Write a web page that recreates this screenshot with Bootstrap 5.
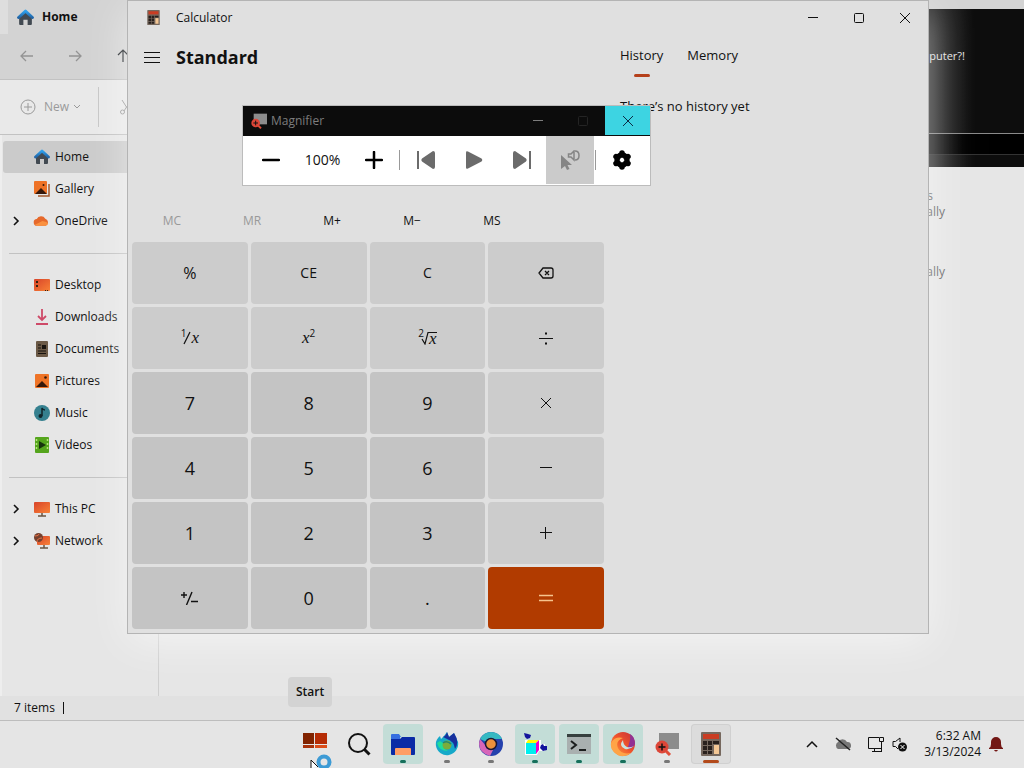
<!DOCTYPE html>
<html lang="en">
<head>
    <meta charset="UTF-8">
    <meta name="viewport" content="width=device-width, initial-scale=1.0">
    <title>Desktop</title>
    <!-- Bootstrap CSS -->
    <link href="https://cdn.jsdelivr.net/npm/bootstrap@5.3.0/dist/css/bootstrap.min.css" rel="stylesheet">
    <style>
        body {
            font-family: "Open Sans", "Noto Sans", sans-serif;
            font-size: 12px;
            line-height: 16px;
            color: #111;
            background: #e6e6e6;
        }
        button {
            font: inherit;
            color: inherit;
            background: none;
            border: 0;
            padding: 0;
        }
        svg {
            display: block;
            flex: none;
        }
        .line-icon {
            fill: none;
            stroke: currentColor;
        }

        /* Explorer */
        .tab-strip {
            height: 34px;
            padding-left: 17px;
            background: linear-gradient(90deg, #dedede 8px, #d3d3d3 8px);
        }
        .nav-strip {
            height: 46px;
            padding: 0 20px 2px;
            gap: 32px;
            background: #d3d3d3;
            border-bottom: 1px solid #c2c2c2;
            color: #949494;
        }
        .command-strip {
            height: 55px;
            padding-left: 20px;
            background: #e9e9e9;
            border-bottom: 1px solid #c2c2c2;
            color: #9a9a9a;
        }
        .new-btn {
            width: 79px;
            height: 40px;
            border-right: 1px solid #c6c6c6;
        }
        .side-pane {
            width: 159px;
            padding: 6px 0 0 1px;
            border-right: 1px solid #cfcfcf;
            border-left: 2px solid #eee;
        }
        .side-link {
            height: 32px;
            padding-left: 31px;
            gap: 5px;
            color: #111;
            text-decoration: none;
        }
        .side-link.has-arrow {
            padding-left: 9px;
        }
        .side-link.current {
            background: #cbcbcb;
            border-radius: 3px;
        }
        .side-rule {
            height: 1px;
            margin: 16px 0 15px 6px;
            background: #c2c2c2;
        }
        .file-list {
            padding: 53px 79px 0 0;
            color: #666;
            text-align: right;
        }
        .file-gap {
            height: 44px;
        }
        .status-strip {
            height: 24px;
            padding-left: 14px;
            background: #e1e1e1;
        }
        .status-mark {
            width: 1px;
            height: 12px;
            background: #111;
        }

        /* Console */
        .console-win {
            top: 9px;
            right: 0;
            width: 240px;
            height: 158px;
            background: linear-gradient(90deg, #2c2c2c 150px, #0d0d0d 190px);
            color: #e4e4e4;
        }
        .console-text {
            height: 125px;
            padding: 39px 59px 0 0;
            font-size: 11px;
            text-align: right;
            border-bottom: 1px solid #8a8a8a;
        }
        .console-line {
            height: 21px;
            background: linear-gradient(90deg, #1c1c1c 150px, #000 180px);
            border-bottom: 1px solid #333;
        }

        /* Calculator */
        .calc-win {
            top: 0;
            left: 127px;
            right: 95px;
            bottom: 86px;
            background: #e0e0e0;
            border: 1px solid #b4b4b4;
            box-shadow: 0 8px 40px rgba(255, 255, 255, .55);
        }
        .calc-title {
            height: 33px;
            padding-left: 19px;
        }
        .win-btn {
            width: 46px;
            height: 32px;
        }
        .calc-left {
            width: 60%;
            padding: 0 4px 4px;
        }
        .calc-right {
            width: 40%;
            padding: 11px 12px;
            font-size: 13px;
        }
        .calc-head {
            height: 46px;
            padding-left: 12px;
            gap: 16px;
        }
        .calc-head h1 {
            font-size: 18px;
            line-height: 26px;
        }
        .calc-screen {
            height: 122px;
        }
        .memory-row {
            display: grid;
            grid-template-columns: repeat(5, 80px);
            height: 40px;
            padding-bottom: 2px;
        }
        .memory-row button:disabled {
            color: #999;
        }
        .key-grid {
            display: grid;
            grid-template-columns: repeat(4, 1fr);
            grid-auto-rows: 1fr;
            gap: 3px;
        }
        .key {
            display: flex;
            align-items: center;
            justify-content: center;
            background: #ccc;
            border-radius: 4px;
            font-size: 14px;
        }
        .key.digit {
            background: #c4c4c4;
            font-size: 18px;
        }
        .key.percent {
            font-size: 16px;
        }
        .key.equals {
            background: #b13b00;
            color: #f6c48d;
        }
        .key i {
            font-family: "Liberation Serif", serif;
            font-size: 17px;
        }
        .key sup {
            font-size: 10px;
        }
        .key .tucked {
            margin-right: -3px;
        }
        .key .root-x {
            border-top: 1px solid #111;
            line-height: 11px;
        }
        .side-tabs {
            gap: 24px;
        }
        .side-tabs button {
            height: 29px;
            padding-bottom: 9px;
            line-height: 20px;
        }
        .tab-mark {
            width: 16px;
            height: 3px;
            border-radius: 2px;
            background: #b5401b;
        }
        .history-note {
            margin: 19px 0 0;
            line-height: 20px;
        }

        /* Magnifier */
        .mag-win {
            top: 105px;
            left: 242px;
            width: 409px;
            background: #fff;
            border: 1px solid #bcbcbc;
        }
        .mag-title {
            height: 30px;
            padding-left: 8px;
            background: #0c0c0c;
            color: #7d7d7d;
        }
        .mag-title .win-btn {
            width: 45px;
            height: 30px;
        }
        .mag-title .mag-close {
            height: 29px;
            align-self: start;
            background: #3dd4e2;
            color: #0c2c44;
        }
        .mag-title button:disabled {
            color: #242424;
        }
        .mag-tools {
            height: 49px;
            padding-bottom: 1px;
            color: #6b6b6b;
        }
        .mag-tools button {
            width: 48px;
            height: 48px;
            display: flex;
            align-items: center;
            justify-content: center;
        }
        .mag-level {
            width: 47px;
            font-size: 14px;
            color: #111;
            text-align: center;
        }
        .mag-gap {
            width: 1px;
            height: 20px;
            margin: 0 2px 0 1px;
            background: #999;
        }
        .mag-tools .pressed {
            background: #cbcbcb;
        }

        /* Taskbar */
        .task-strip {
            display: grid;
            grid-template-columns: 1fr auto 1fr;
            height: 48px;
            background: #e5e5e5;
            box-shadow: inset 0 1px #bdbdbd;
        }
        .task-icons {
            padding-left: 2px;
        }
        .task-btn {
            position: relative;
            width: 40px;
            height: 40px;
            border-radius: 4px;
            display: flex;
            align-items: center;
            justify-content: center;
        }
        .task-btn.running {
            background: #c3ddd7;
        }
        .task-btn.front {
            background: #dcdcdc;
            box-shadow: inset 0 0 0 1px #d0d0d0;
        }
        .run-mark {
            position: absolute;
            bottom: 1px;
            width: 6px;
            height: 3px;
            border-radius: 2px;
            background: #777;
        }
        .running .run-mark {
            background: #16705c;
        }
        .front .run-mark {
            width: 16px;
            background: #b34a1b;
        }
        .start-tip {
            bottom: 13px;
            left: 288px;
            padding: 7px 8px;
            background: #d3d3d3;
            border-radius: 4px;
        }
        .pointer {
            left: 310px;
            bottom: 0;
        }
        .tray {
            padding-right: 21px;
            color: #111;
        }
    </style>
</head>
<body class="vh-100 d-flex flex-column overflow-hidden">

    <!-- Shared icons -->
    <svg width="0" height="0" class="position-absolute">
        <defs>
            <linearGradient id="orange" x1="0" y1="0" x2="1" y2="1"><stop stop-color="#d8442a"/><stop offset="1" stop-color="#f98236"/></linearGradient>
            <linearGradient id="edge" x1="0" y1="1" x2="1" y2="0"><stop stop-color="#ffae43"/><stop offset=".5" stop-color="#f0562c"/><stop offset="1" stop-color="#c52f38"/></linearGradient>
            <linearGradient id="roof" x1="0" y1="0" x2="0" y2="1"><stop stop-color="#2fa0ec"/><stop offset="1" stop-color="#2266a8"/></linearGradient>
            <symbol id="house" viewBox="0 0 16 16"><path d="M2 7v7q0 1 1 1h3v-5h4v5h3q1 0 1-1V7L8 2z" fill="#424a52"/><path d="M1.500 8 8 2l6.500 6" fill="none" stroke="url(#roof)" stroke-width="2.800" stroke-linecap="round" stroke-linejoin="round"/></symbol>
            <symbol id="picture" viewBox="0 0 16 16"><rect x="1" y="1" width="14" height="14" rx="1" fill="#ef7427"/><path d="m2 14 6-6 6 6z" fill="#35180b"/><circle cx="11.500" cy="4.500" r="1.300" fill="#35180b"/></symbol>
            <symbol id="calc" viewBox="0 0 20 24"><rect width="20" height="24" rx="1" fill="#76685e"/><path fill="#ca3c22" d="M2 2h16v5H2z"/><path fill="#29201c" d="M2 9h4v4H2zm5 0h4v4H7zm5 0h6v3h-6zM2 14h4v4H2zm5 0h4v4H7zM2 19h4v3H2zm5 0h4v3H7z"/><path fill="#f4c795" d="M13 13h5v9h-5z"/></symbol>
            <symbol id="magnify" viewBox="0 0 24 24"><path fill="#8c8c8c" d="M4 1h20v16H4z"/><path stroke="#e04c37" stroke-width="3" d="m10 18 5 5"/><circle cx="7" cy="15" r="6.500" fill="#dc4638"/><path stroke="#111" stroke-width="1.500" d="M3.500 15h7M7 11.500v7"/></symbol>
            <symbol id="min" viewBox="0 0 12 12"><path d="M1 5.500h10"/></symbol>
            <symbol id="max" viewBox="0 0 12 12"><rect x="1.500" y="1.500" width="9" height="9" rx="1"/></symbol>
            <symbol id="close" viewBox="0 0 12 12"><path d="m1 1 10 10M11 1 1 11"/></symbol>
            <symbol id="arrow" viewBox="0 0 8 12"><path d="m2 2 4 4-4 4"/></symbol>
        </defs>
    </svg>

    <main class="position-relative flex-grow-1 overflow-hidden">

        <!-- File Explorer -->
        <section class="h-100 d-flex flex-column">
            <div class="tab-strip d-flex align-items-center gap-2 fw-bold">
                <svg width="17" height="17"><use href="#house"/></svg>Home
            </div>
            <div class="nav-strip d-flex align-items-center">
                <button aria-label="Back"><svg class="line-icon" width="16" height="16"><path d="M13 8H1m5-5L1 8l5 5" stroke-width="1.300"/></svg></button>
                <button aria-label="Forward"><svg class="line-icon" width="16" height="16"><path d="M1 8h12M8 3l5 5-5 5" stroke-width="1.300"/></svg></button>
                <button class="text-dark" aria-label="Up"><svg class="line-icon" width="14" height="16"><path d="M7 14V2M2 7l5-5 5 5" stroke-width="1.200"/></svg></button>
            </div>
            <div class="command-strip d-flex align-items-center">
                <button class="new-btn d-flex align-items-center">
                    <svg class="line-icon me-2" width="16" height="16"><circle cx="8" cy="8" r="7"/><path d="M8 4v8M4 8h8"/></svg>New
                    <svg class="line-icon ms-1" width="8" height="8"><path d="m1 2 3 3 3-3"/></svg>
                </button>
                <button class="ms-3" aria-label="Cut"><svg class="line-icon ms-1" width="16" height="16"><path d="m3 1 7 11M12 1 5 12"/><circle cx="3.500" cy="13" r="2"/><circle cx="11.500" cy="13" r="2"/></svg></button>
            </div>
            <div class="d-flex flex-grow-1">
                <nav class="side-pane">
                    <a href="#" class="side-link current d-flex align-items-center"><svg width="16" height="16"><use href="#house"/></svg>Home</a>
                    <a href="#" class="side-link d-flex align-items-center"><svg width="16" height="16"><path d="M4 15h11V3" fill="none" stroke="#a4592e" stroke-width="1.500"/><rect width="13" height="13" rx="1" fill="#ee7226"/><path d="m1 13 6-6 6 6z" fill="#35180b"/><circle cx="9.500" cy="4" r="1" fill="#35180b"/></svg>Gallery</a>
                    <a href="#" class="side-link has-arrow d-flex align-items-center"><svg class="line-icon" width="8" height="12" stroke-width="1.600"><use href="#arrow"/></svg><svg class="ms-2" width="17" height="16" viewBox="0 0 18 16"><path d="M4.500 13a3.500 3.500 0 0 1-.5-7 5 5 0 0 1 9-.5A4 4 0 0 1 13.500 13z" fill="#e6692b"/><path d="m2 12 8-4 4 1 2 2a3 3 0 0 1-2.500 2h-9z" fill="#fa913f"/></svg>OneDrive</a>
                    <div class="side-rule"></div>
                    <a href="#" class="side-link d-flex align-items-center"><svg width="16" height="16"><rect y="2" width="16" height="12" rx="1" fill="url(#orange)"/><path d="M2 4h2v2H2zm0 4h2v2H2zm9 5h1v1h-1zm2 0h1v1h-1z" fill="#321"/></svg>Desktop</a>
                    <a href="#" class="side-link d-flex align-items-center"><svg width="16" height="16" fill="none" stroke="#ce4a68"><path d="M8 0v11M4 7l4 4 4-4M2 15h12" stroke-width="1.800"/></svg>Downloads</a>
                    <a href="#" class="side-link d-flex align-items-center"><svg width="16" height="16"><rect x="2" width="12" height="16" rx="1" fill="#6b5946"/><path d="M4 4h3m-3 3h3m-3 3h8m-8 2.500h8" stroke="#17120e" stroke-width="1.200"/><path d="M8 4h4v4H8z" fill="#17120e"/></svg>Documents</a>
                    <a href="#" class="side-link d-flex align-items-center"><svg width="16" height="16"><use href="#picture"/></svg>Pictures</a>
                    <a href="#" class="side-link d-flex align-items-center"><svg width="16" height="16"><circle cx="8" cy="8" r="8" fill="#35808f"/><path d="M8 11V3q1 2 3 2" fill="none" stroke="#102329" stroke-width="1.500"/><circle cx="6.500" cy="11" r="2" fill="#102329"/></svg>Music</a>
                    <a href="#" class="side-link d-flex align-items-center"><svg width="16" height="16"><rect x="1" width="14" height="16" rx="1" fill="#55a51d"/><path d="M2.500 2v12M13.500 2v12" stroke="#b6e47c" stroke-width="1.500" stroke-dasharray="2 2"/><path d="m5 4 7 4-7 4z" fill="#17330e"/></svg>Videos</a>
                    <div class="side-rule"></div>
                    <a href="#" class="side-link has-arrow d-flex align-items-center"><svg class="line-icon" width="8" height="12" stroke-width="1.600"><use href="#arrow"/></svg><svg class="ms-2" width="17" height="16"><rect x="1" y="1" width="16" height="11" rx="1" fill="url(#orange)"/><path d="M9 12v3m-4 0h8" stroke="#6b5542" stroke-width="1.500"/></svg>This PC</a>
                    <a href="#" class="side-link has-arrow d-flex align-items-center"><svg class="line-icon" width="8" height="12" stroke-width="1.600"><use href="#arrow"/></svg><svg class="ms-2" width="17" height="16"><rect x="4" y="3" width="13" height="9" rx="1" fill="url(#orange)"/><path d="M11 12v3m-4 0h8" stroke="#6b5542" stroke-width="1.500"/><circle cx="5.500" cy="4.500" r="4.500" fill="#74402f"/><path d="M2 3q4 0 4-2m-2 8q0-4 5-4" fill="none" stroke="#e97244"/></svg>Network</a>
                </nav>
                <div class="file-list flex-grow-1">
                    <div class="pe-2 me-1">Documents</div>
                    <div>Stored locally</div>
                    <div class="file-gap"></div>
                    <div>Stored locally</div>
                </div>
            </div>
            <div class="status-strip d-flex align-items-center">7 items<span class="status-mark ms-2"></span></div>
        </section>

        <!-- Console -->
        <section class="console-win position-absolute">
            <div class="console-text">computer?!</div>
            <div class="console-line"></div>
        </section>

        <!-- Calculator -->
        <section class="calc-win position-absolute d-flex flex-column">
            <div class="calc-title d-flex align-items-center">
                <svg width="13" height="15"><use href="#calc"/></svg>
                <span class="ms-3 me-auto">Calculator</span>
                <button class="win-btn d-flex align-items-center justify-content-center" aria-label="Minimize"><svg class="line-icon" width="12" height="12"><use href="#min"/></svg></button>
                <button class="win-btn d-flex align-items-center justify-content-center" aria-label="Maximize"><svg class="line-icon" width="12" height="12"><use href="#max"/></svg></button>
                <button class="win-btn d-flex align-items-center justify-content-center" aria-label="Close"><svg class="line-icon" width="12" height="12"><use href="#close"/></svg></button>
            </div>
            <div class="d-flex flex-grow-1">
                <div class="calc-left d-flex flex-column">
                    <div class="calc-head d-flex align-items-center">
                        <button aria-label="Open navigation"><svg class="line-icon" width="16" height="16"><path d="M0 3.500h16M0 8.500h16M0 13.500h16"/></svg></button>
                        <h1 class="m-0 fw-bold">Standard</h1>
                    </div>
                    <div class="calc-screen"></div>
                    <div class="memory-row">
                        <button disabled>MC</button>
                        <button disabled>MR</button>
                        <button>M+</button>
                        <button>M−</button>
                        <button>MS</button>
                    </div>
                    <div class="key-grid flex-grow-1">
                        <button class="key percent">%</button>
                        <button class="key">CE</button>
                        <button class="key">C</button>
                        <button class="key" aria-label="Backspace"><svg class="line-icon" width="16" height="12" stroke-width="1.300"><path d="M5 1h8a2 2 0 0 1 2 2v6a2 2 0 0 1-2 2H5L1 6zM7 4l4 4m0-4L7 8"/></svg></button>
                        <button class="key" aria-label="Reciprocal"><sup class="tucked">1</sup><svg class="line-icon" width="8" height="14"><path d="M1 13 7 1" stroke-width="1.200"/></svg><i>x</i></button>
                        <button class="key" aria-label="Square"><i>x</i><sup>2</sup></button>
                        <button class="key" aria-label="Square root"><sup class="tucked">2</sup><svg class="line-icon" width="8" height="14"><path d="M1 8l3 5L7 1.500h1" stroke-width="1.200"/></svg><i class="root-x">x</i></button>
                        <button class="key" aria-label="Divide"><svg class="line-icon" width="14" height="14"><path d="M0 7.500h14"/><path d="M6 2.500h2m-2 10h2" stroke-width="2"/></svg></button>
                        <button class="key digit">7</button>
                        <button class="key digit">8</button>
                        <button class="key digit">9</button>
                        <button class="key" aria-label="Multiply"><svg class="line-icon" width="12" height="12"><use href="#close"/></svg></button>
                        <button class="key digit">4</button>
                        <button class="key digit">5</button>
                        <button class="key digit">6</button>
                        <button class="key" aria-label="Minus"><svg class="line-icon" width="12" height="12"><path d="M0 5.500h12"/></svg></button>
                        <button class="key digit">1</button>
                        <button class="key digit">2</button>
                        <button class="key digit">3</button>
                        <button class="key" aria-label="Plus"><svg class="line-icon" width="12" height="12"><path d="M0 5.500h12M5.500 0v12"/></svg></button>
                        <button class="key digit" aria-label="Negate"><svg class="line-icon" width="17" height="14"><path d="M0 4h6M3 1v6M5.500 14 11 1M10 10.500h7" stroke-width="1.400"/></svg></button>
                        <button class="key digit">0</button>
                        <button class="key digit">.</button>
                        <button class="key equals" aria-label="Equals"><svg class="line-icon" width="14" height="8"><path d="M0 1.500h14M0 6.500h14" stroke-width="1.400"/></svg></button>
                    </div>
                </div>
                <div class="calc-right">
                    <div class="side-tabs d-flex">
                        <div class="d-flex flex-column align-items-center">
                            <button>History</button>
                            <span class="tab-mark"></span>
                        </div>
                        <div><button>Memory</button></div>
                    </div>
                    <p class="history-note">There’s no history yet</p>
                </div>
            </div>
        </section>

        <!-- Magnifier -->
        <section class="mag-win position-absolute">
            <div class="mag-title d-flex align-items-center">
                <svg width="16" height="16"><use href="#magnify"/></svg>
                <span class="ms-1 me-auto">Magnifier</span>
                <button class="win-btn d-flex align-items-center justify-content-center" aria-label="Minimize"><svg class="line-icon" width="12" height="12"><use href="#min"/></svg></button>
                <button class="win-btn d-flex align-items-center justify-content-center" disabled aria-label="Maximize"><svg class="line-icon" width="12" height="12"><use href="#max"/></svg></button>
                <button class="win-btn mag-close d-flex align-items-center justify-content-center" aria-label="Close"><svg class="line-icon" width="12" height="12"><use href="#close"/></svg></button>
            </div>
            <div class="mag-tools d-flex align-items-center ps-1">
                <button class="text-black" aria-label="Zoom out"><svg class="line-icon" width="18" height="18"><path d="M1 9h16" stroke-width="2.500" stroke-linecap="round"/></svg></button>
                <span class="mag-level mx-1">100%</span>
                <button class="text-black" aria-label="Zoom in"><svg class="line-icon" width="18" height="18"><path d="M1 9h16M9 1v16" stroke-width="2.500" stroke-linecap="round"/></svg></button>
                <span class="mag-gap"></span>
                <button aria-label="Previous"><svg width="20" height="18" fill="currentColor"><path d="M1 0h2v18H1zM17 0q2 0 2 2v14q0 2-2 2L6 10.500q-1.500-1.500 0-3z"/></svg></button>
                <button aria-label="Play"><svg width="18" height="18" fill="currentColor"><path d="M1 1.500Q1-.5 3 .5l13.500 7q1.500 1.500 0 3l-13.500 7q-2 1-2-1z"/></svg></button>
                <button aria-label="Next"><svg width="20" height="18" fill="currentColor"><path d="M17 0h2v18h-2zM3 0Q1 0 1 2v14q0 2 2 2l11-7.500q1.500-1.500 0-3z"/></svg></button>
                <button class="pressed" aria-label="Read from here"><svg width="20" height="20" fill="#858585"><path d="m1 5 11 10H7.500l2 4-2.500 1-2-4-4 3z"/><path d="M8.500 4H11l3-3v9l-3-3H8.500z" fill="none" stroke="#858585" stroke-width="1.500"/><path d="M15 1q4 0 4 4.500T15 10" fill="none" stroke="#858585" stroke-width="1.500"/></svg></button>
                <span class="mag-gap"></span>
                <button class="text-black" aria-label="Settings"><svg width="20" height="20" viewBox="-10 -10 20 20"><g stroke="currentColor" stroke-width="5.500" stroke-linecap="round"><path d="M0-7V-5M0 7V5M6-3.500 4-2.500M-6-3.500-4-2.500M6 3.500 4 2.500M-6 3.500-4 2.500"/></g><circle r="5.200" fill="none" stroke="currentColor" stroke-width="5"/></svg></button>
            </div>
        </section>

        <div class="start-tip position-absolute fw-semibold">Start</div>
    </main>

    <!-- Taskbar -->
    <footer class="task-strip position-relative">
        <div></div>
        <div class="task-icons d-flex align-items-center gap-1">
            <button class="task-btn" aria-label="Start"><svg width="24" height="24"><path fill="#812300" d="M0 1h11v11H0z"/><path fill="#b52c05" d="M12 1h12v11H12z"/><path fill="#a8310b" d="M0 13h11v3H0z"/><path fill="#dc4d19" d="M12 13h12v3H12z"/></svg></button>
            <button class="task-btn" aria-label="Search"><svg class="line-icon" width="24" height="24"><circle cx="11" cy="11" r="9" stroke-width="2"/><path d="m17.500 17.500 5 5" stroke-width="3"/></svg></button>
            <button class="task-btn running" aria-label="File Explorer"><svg width="26" height="24"><path fill="#356fe0" d="M1 3q0-1 1-1h7l2 3h-1v6H1z"/><path fill="#092ba6" d="M1 7h9l2-2h12q1 0 1 1v16q0 1-1 1H2q-1 0-1-1z"/><path fill="#ff9e65" d="M5 17q0-1 1-1h14q1 0 1 1v6H5z"/></svg><span class="run-mark"></span></button>
            <button class="task-btn" aria-label="Firefox"><svg width="24" height="24"><path fill="#16a9c9" d="M1 14Q0 8 5 4l1 3 3-3 3-4 2 5 5-4 4 9a11 11 0 0 1-22 4"/><path fill="#182f9d" d="M8 5q3-1 4-5l2 5 5-4q6 9 1 16-1-8-8-10z"/><path fill="#20dc9a" d="M2 11q2 8 11 8-6-3-5-8L5 9z"/><circle cx="12" cy="13" r="4.500" fill="#7bad3b"/><path d="M8 11q4-3 8 1" stroke="#25866f" stroke-width="1.500" fill="none"/></svg><span class="run-mark"></span></button>
            <button class="task-btn" aria-label="Chrome"><svg width="24" height="24"><circle cx="12" cy="12" r="12" fill="#2541ad"/><path fill="#35b9c2" d="M12 12 1 7Q5 0 12 0q8 0 11 7H12z"/><path fill="#d765b8" d="M12 17 7 14 1 7q-4 13 10 17l4-8z"/><circle cx="12" cy="12" r="5.500" fill="#ec913d" stroke="#1b1734" stroke-width="1.500"/></svg><span class="run-mark"></span></button>
            <button class="task-btn running" aria-label="Registry Editor"><svg width="24" height="24"><path fill="#fff" d="M2 8h16v4h4v7h-6l-2 4H2z"/><path fill="#0ee" d="M3 11h10v11H3z"/><path fill="#ff0" d="m5 8h11l-3 3H3z"/><path fill="#e0c" d="m13 11 3-3v10l-3 4z"/><path fill="#14149c" d="m1 1 4 1 3 1-1 3-3 1-2-2zM18 13l2-1 1 2h3v4l-4 1-3-3z"/></svg><span class="run-mark"></span></button>
            <button class="task-btn running" aria-label="Terminal"><svg width="24" height="24"><path fill="#a9b0b0" d="M0 2h24v20H0z"/><path fill="#37403f" d="M0 2h24v3H0z"/><path d="m4 9 5 4-5 4M12 18h7" fill="none" stroke="#1b1e1e" stroke-width="2"/></svg><span class="run-mark"></span></button>
            <button class="task-btn running" aria-label="Edge"><svg width="26" height="26"><circle cx="13" cy="13" r="12" fill="url(#edge)"/><path fill="#913294" d="M20 3q5 3 5 10-2 5-8 5 4-8 3-15"/><path fill="#ffa447" d="M1 12q4-7 12-5-8 3-5 10 3 7 13 5-9 7-17-1-4-4-3-9"/><path fill="#cce1dc" d="M13 9q-5 6 2 9 5 1 9-3-4 2-7 1-4-2-4-7"/></svg><span class="run-mark"></span></button>
            <button class="task-btn" aria-label="Magnifier"><svg width="24" height="24"><use href="#magnify"/></svg><span class="run-mark"></span></button>
            <button class="task-btn front" aria-label="Calculator"><svg width="20" height="24"><use href="#calc"/></svg><span class="run-mark"></span></button>
        </div>
        <div class="tray d-flex align-items-center justify-content-end">
            <svg class="line-icon" width="12" height="8" stroke-width="1.500"><path d="m1 7 5-5 5 5"/></svg>
            <svg class="ms-3" width="18" height="16"><path fill="#777" d="M4 13a4 4 0 0 1 0-7 5 5 0 0 1 9 0 3.500 3.500 0 0 1 1 7z"/><path d="m2 2 14 12" stroke="#222" stroke-width="1.500"/></svg>
            <svg class="line-icon ms-3" width="16" height="17"><path d="M11 1.500H.5v11h13V7M4 15.500h9M6.500 13v2"/><path d="M11.500 1.500h4v4h-4zM13.500 6v10"/></svg>
            <svg class="ms-2" width="16" height="16"><path d="M1 5.500h2.500L8 2v4M1 5.500v5h2.500L6 13" fill="none" stroke="#111"/><circle cx="10.500" cy="11" r="4.500" fill="#111"/><path d="m8.500 9 4 4m0-4-4 4" stroke="#fff"/></svg>
            <div class="text-end mx-2 ps-2">6:32 AM<br>3/13/2024</div>
            <svg width="14" height="16" fill="#721714"><path d="M0 12q2-1 2-4V6a5 5 0 0 1 10 0v2q0 3 2 4v1H0zM5 14h4q-2 3-4 0"/></svg>
        </div>
        <!-- Busy pointer -->
        <svg class="pointer position-absolute" width="22" height="14"><path d="M1 14V6l7 7" fill="#fff" stroke="#111"/><circle cx="14" cy="8" r="5.500" fill="none" stroke="#3d9bd5" stroke-width="4"/></svg>
    </footer>

    <!-- Bootstrap JS -->
    <script src="https://cdn.jsdelivr.net/npm/bootstrap@5.3.0/dist/js/bootstrap.bundle.min.js"></script>
</body>
</html>
